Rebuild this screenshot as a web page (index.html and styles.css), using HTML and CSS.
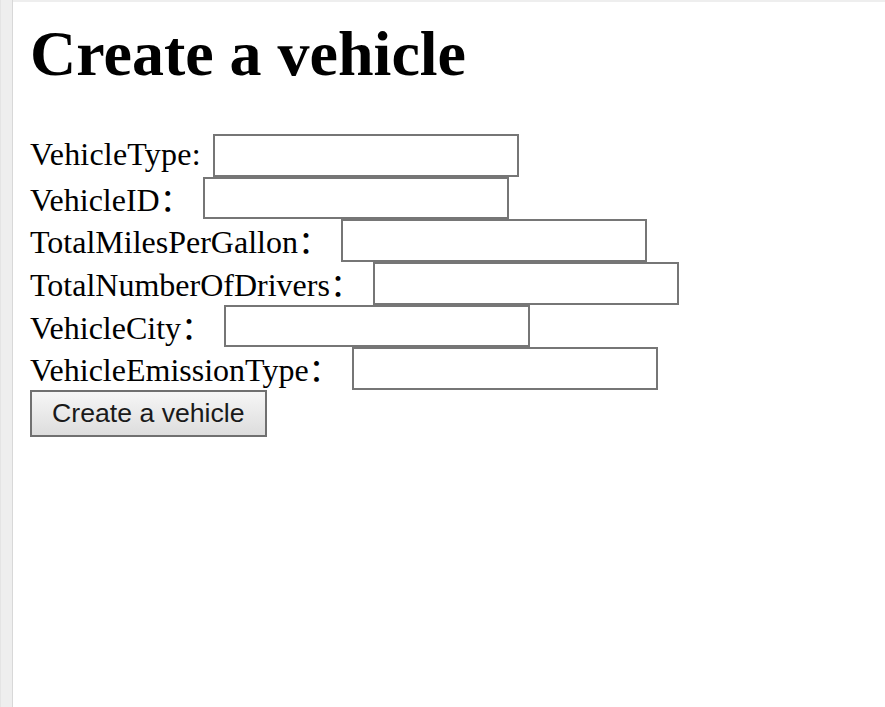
FILE: index.html
```html
<!DOCTYPE html>
<html lang="en">
<head>
<meta charset="utf-8">
<title>Create a vehicle</title>
<link rel="stylesheet" href="styles.css">
</head>
<body>
<div class="frame-left"></div>
<main class="page">
  <h1 class="title">Create a vehicle</h1>
  <form class="form">
    <div class="row"><label class="label label-ascii">VehicleType:</label><input class="field" type="text"></div>
    <div class="row"><label class="label">VehicleID<span class="fw">：</span></label><input class="field" type="text"></div>
    <div class="row"><label class="label">TotalMilesPerGallon<span class="fw">：</span></label><input class="field" type="text"></div>
    <div class="row"><label class="label">TotalNumberOfDrivers<span class="fw">：</span></label><input class="field" type="text"></div>
    <div class="row"><label class="label">VehicleCity<span class="fw">：</span></label><input class="field" type="text"></div>
    <div class="row"><label class="label">VehicleEmissionType<span class="fw">：</span></label><input class="field" type="text"></div>
    <button class="submit" type="button">Create a vehicle</button>
  </form>
</main>
</body>
</html>
```
FILE: styles.css
```css
html, body {
  margin: 0;
  padding: 0;
  height: 100%;
  background: #ffffff;
}
body {
  display: flex;
  min-height: 100vh;
  font-family: "Liberation Serif", "Times New Roman", serif;
  color: #000;
}
.frame-left {
  width: 11px;
  flex: none;
  background: #eeeeee;
  border-left: 1px solid #e4e4e4;
  border-right: 1px solid #d8d8d8;
}
.page {
  flex: 1;
  border-top: 2px solid #eeeeee;
  padding: 16px 17px 0;
}
.title {
  margin: 0 0 45px;
  font-family: "Liberation Serif", "Times New Roman", serif;
  font-weight: bold;
  font-size: 64px;
  line-height: 71px;
}
.form {
  margin: 0;
}
.row {
  display: flex;
  align-items: flex-start;
  height: 42.67px;
}
.label {
  font-size: 32px;
  line-height: 40.5px;
  margin-right: 11px;
  white-space: nowrap;
}
.label-ascii {
  letter-spacing: 0.2px;
  margin-right: 12px;
}
.fw {
  font-family: "Noto Sans CJK SC", sans-serif;
  font-size: 32px;
  line-height: 40.5px;
}
.field {
  box-sizing: border-box;
  width: 306px;
  height: 42.67px;
  margin: 0;
  padding: 2px 4px;
  border: 2px solid #767676;
  border-radius: 0;
  background: #fff;
  font-family: "Liberation Sans", Arial, sans-serif;
  font-size: 26.67px;
  flex: none;
}
.submit {
  box-sizing: border-box;
  height: 47px;
  margin: 0;
  padding: 6px 20px;
  border: 2px solid #707070;
  border-radius: 0;
  background: linear-gradient(#f6f6f6, #dddddd);
  font-family: "Liberation Sans", Arial, sans-serif;
  font-size: 26.67px;
  line-height: normal;
  color: #1a1a1a;
}
```
